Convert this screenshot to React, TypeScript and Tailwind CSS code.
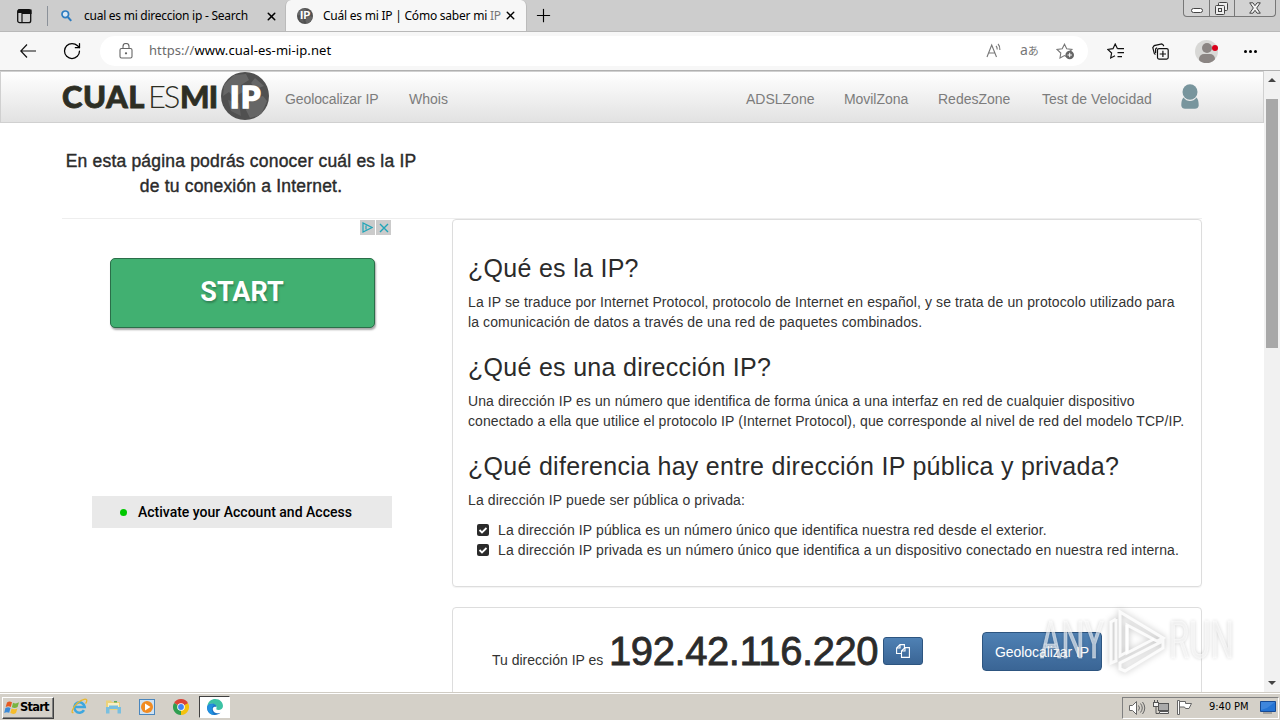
import { ReactNode } from "react";
import { LuPlus, LuX, LuRotateCw } from "react-icons/lu";

const UI = "font-['Noto_Sans',sans-serif]";

function Globe({ size, children }: { size: string; children?: ReactNode }) {
  return (
    <div className={`${size} relative shrink-0 rounded-full bg-[#505050] overflow-hidden`}>
      <svg viewBox="0 0 48 48" className="w-full h-full">
        <path d="M3 13 L13 3 L25 2 L28 8 L20 13 L22 20 L13 25 L8 20 L2 24Z M31 27 L42 24 L46 29 L40 43 L29 46 L25 38Z M34 6 L43 14 L35 17 L30 11Z" fill="#666" />
        <path d="M7 28 L18 31 L20 44 L10 39Z" fill="#606060" />
      </svg>
      <div className="absolute inset-0 flex items-center justify-center">{children}</div>
    </div>
  );
}

function TabBar() {
  return (
    <div className={`${UI} h-[31px] flex bg-[#cdcdcd] text-xs text-black`}>
      <div className="w-[47px] pl-[17px] pt-[9px]">
        <svg width="15" height="15" viewBox="0 0 15 15">
          <rect x="0.7" y="0.7" width="13" height="13" rx="2" fill="none" stroke="#111" strokeWidth="1.3" />
          <path d="M1 1h13v3.5H5V14" fill="none" stroke="#111" strokeWidth="1.2" />
          <path d="M1 1h13v3H1z" fill="#111" />
        </svg>
      </div>
      <div className="w-[238px] my-[6px] h-5 border-l border-[#8b9199] flex items-center">
        <svg className="ml-[13px]" width="11" height="12" viewBox="0 0 11 12">
          <circle cx="4.3" cy="4.3" r="3.3" fill="#d9e8f5" stroke="#2d7cc0" strokeWidth="1.7" />
          <path d="M6.8 7 10.2 10.8" stroke="#2d7cc0" strokeWidth="2" />
        </svg>
        <span className="ml-[12px] w-[164px] whitespace-nowrap tracking-[-0.26px]">cual es mi direccion ip - Search</span>
        <LuX className="ml-[17px] w-[13px] h-[13px] shrink-0" strokeWidth={2.8} />
      </div>
      <div className="w-[242px] bg-[#f7f7f7] rounded-t-md border-x border-[#bbb] flex items-center">
        <div className="ml-[11px]">
          <Globe size="w-4 h-4">
            <span className="font-['Lato',sans-serif] font-black text-white text-[11px]">IP</span>
          </Globe>
        </div>
        <span className="ml-[10px] w-[171px] whitespace-nowrap tracking-[-0.23px]">
          Cuál es mi IP | Cómo saber mi <span className="text-[#777]">IP</span>
        </span>
        <LuX className="ml-[10px] w-[13px] h-[13px] shrink-0" strokeWidth={2.6} />
      </div>
      <LuPlus className="ml-[6px] mt-[5px] w-[21px] h-[21px]" strokeWidth={1.3} />
      <div className="ml-auto mr-1 w-[93px] h-[17px] flex border border-t-0 border-[#777] rounded-b bg-[#d2d2d2]">
        <div className="w-[26px] pl-[7px] pt-[8px] border-r border-[#777]">
          <div className="w-3 h-[5px] rounded-sm border border-[#444] bg-white" />
        </div>
        <div className="w-[25px] pl-[5px] pt-[2px] border-r border-[#777]">
          <svg width="13" height="13" viewBox="0 0 13 13" fill="#eee" stroke="#444">
            <rect x="3.5" y="0.5" width="9" height="8" rx="1" />
            <rect x="0.5" y="3.5" width="9" height="9" rx="1" />
            <rect x="3.5" y="6.5" width="3" height="3" />
          </svg>
        </div>
        <svg className="ml-[14px] mt-[2px]" width="12" height="12" viewBox="0 0 12 12">
          <path d="M.7.8h3.2L6 3.7 8.1.8h3.2L7.7 6l3.6 5.2H8.1L6 8.3l-2.1 2.9H.7L4.3 6Z" fill="#f3f3f3" stroke="#444" />
        </svg>
      </div>
    </div>
  );
}

function AddressBar() {
  return (
    <div className={`${UI} h-10 bg-[#f7f7f7] border-t border-t-[#b9b9b9] border-b-[#b0b0b0] border-b flex items-center`}>
      <svg className="ml-5 shrink-0" width="16" height="14" viewBox="0 0 16 14" fill="none" stroke="#111" strokeWidth="1.2">
        <path d="M7 .5.8 7 7 13.5M.8 7H16" />
      </svg>
      <LuRotateCw className="ml-[26px] w-5 h-5 shrink-0" strokeWidth={1.5} />
      <div className="ml-[18px] w-[988px] h-[30px] bg-white rounded-full flex items-center shrink-0">
        <svg className="ml-[19px] shrink-0" width="14" height="16" viewBox="0 0 14 16" fill="none" stroke="#666" strokeWidth="1.1">
          <rect x="1" y="5.5" width="12" height="9.500" rx="1.5" />
          <path d="M4 5.500V3.500a3 3 0 0 1 6 0v2" />
          <circle cx="7" cy="10.300" r=".6" fill="#666" />
        </svg>
        <span className="ml-[16px] w-[190px] text-[13px] tracking-[0.08px] whitespace-nowrap text-black">
          <span className="text-[#6b6b6b]">https://</span>www.cual-es-mi-ip.net
        </span>
        <svg className="ml-[647px]" width="17" height="16" viewBox="0 0 17 16" fill="none" stroke="#777" strokeWidth="1.1">
          <path d="M1 14 5.7 2 10.5 14M2.7 10h6M10 3c1 1 1.300 2 1.200 3.500M12 1c1.600 1.600 2.200 3.500 1.900 6" />
        </svg>
        <span className="ml-[17px] mb-[2px] w-[19px] text-[12px] leading-4 text-[#777] flex items-baseline">
          <span className="text-[14px]">a</span>
          <span className="font-['Noto_Sans_CJK_JP',sans-serif] text-[11px]">あ</span>
        </span>
        <svg className="ml-[17px]" width="19" height="17" viewBox="0 0 19 17">
          <path d="m8.500 1.200 2.200 4.600 5.200.7-3.800 3.500.8 5-4.400-2.400L4 15l.8-5L1 6.500l5.200-.7Z" fill="none" stroke="#777" strokeWidth="1.100" />
          <circle cx="13.700" cy="12" r="4.300" fill="#666" />
          <path d="M11.500 12h4.400M13.700 9.800v4.400" stroke="#fff" />
        </svg>
      </div>
      <svg className="ml-[19px] shrink-0" width="18" height="17" viewBox="0 0 18 17" fill="none" stroke="#111" strokeWidth="1.200">
        <path d="M10.500 5.700 8.200 1 6 5.700.8 6.500 4.600 10l-.9 5 4.300-2.300M10.500 5.700H17M10.500 9.700H17M10.500 13.700H15" />
      </svg>
      <svg className="ml-[27px] shrink-0" width="17" height="17" viewBox="0 0 17 17" fill="none" stroke="#111" strokeWidth="1.200">
        <path d="M3.500 11.500 2.300 10.500 .8 4.600 2.200 2.600 9.800.8l1.700 1.400v1M3.600 10V6l1.400-1.400" />
        <rect x="5.500" y="5.600" width="10.700" height="10.500" rx="1.500" />
        <path d="M10.900 7.800v6.300M7.700 11H14" />
      </svg>
      <div className="relative ml-[26px] w-[23px] h-[23px] shrink-0 mr-[26px]">
        <div className="w-[23px] h-[23px] rounded-full overflow-hidden bg-[#d8d8d6] flex flex-col items-center">
          <div className="mt-[3px] w-[10px] h-[10px] shrink-0 rounded-full bg-[#8b8583]" />
          <div className="mt-[1px] w-[16px] h-[10px] shrink-0 rounded-full bg-[#8b8583]" />
        </div>
        <div className="absolute right-0 top-[5px] w-[6px] h-[6px] rounded-full bg-[#d9001b]" />
      </div>
      <div className="flex gap-[2px]">
        <i className="w-[3px] h-[3px] rounded-full bg-black" />
        <i className="w-[3px] h-[3px] rounded-full bg-black" />
        <i className="w-[3px] h-[3px] rounded-full bg-black" />
      </div>
    </div>
  );
}

function Navbar() {
  return (
    <div className="h-[52px] pl-[61px] border border-[#d0d0d0] bg-linear-to-b from-white to-[#e2e2e2] flex items-center text-[14px] text-[#7c7c7c]">
      <div className="w-[159px] h-full flex font-['Lato',sans-serif] text-[31px] leading-[48px] text-[#2d2e24] whitespace-nowrap">
        <span className="w-[86px] font-black tracking-[0.5px] [-webkit-text-stroke:0.800px_#2d2e24]">CUAL</span>
        <span className="w-[32px] font-light tracking-[-2.2px]">ES</span>
        <span className="font-black tracking-[-0.8px] [-webkit-text-stroke:0.800px_#2d2e24]">MI</span>
      </div>
      <div className="-mt-[2px]">
        <Globe size="w-[48px] h-[48px]">
          <span className="pl-[2px] font-['Lato',sans-serif] font-black text-white text-[31px] leading-none tracking-[1.5px] [-webkit-text-stroke:1.600px_#fff]">IP</span>
        </Globe>
      </div>
      <div className="w-[94px] ml-4 pt-1 whitespace-nowrap tracking-[-0.1px]">Geolocalizar IP</div>
      <div className="w-[40px] ml-[30px] pt-1">Whois</div>
      <div className="w-[68px] ml-[297px] pt-1">ADSLZone</div>
      <div className="w-[65px] ml-[30px] pt-1 tracking-[-0.05px]">MovilZona</div>
      <div className="w-[73px] ml-[29px] pt-1">RedesZone</div>
      <div className="w-[111px] ml-[31px] pt-1 whitespace-nowrap">Test de Velocidad</div>
      <svg className="ml-[28px]" width="18" height="26" viewBox="0 0 18 26" fill="#78959d">
        <ellipse cx="9" cy="8" rx="7.500" ry="7.700" />
        <path d="M2.500 13.500C.8 15 .3 18 .3 21.500c0 2 2 3.300 3.700 3.300h10c1.700 0 3.700-1.300 3.700-3.300 0-3.500-.5-6.500-2.200-8-3.500 4.700-9.500 4.700-13 0Z" />
      </svg>
    </div>
  );
}

function Ad() {
  return (
    <div className="w-[390px] pl-[30px] pt-px">
      <div className="w-[299px] flex justify-end gap-px">
        <div className="w-[15px] h-[15px] bg-[#cbcbcb] flex items-center justify-center">
          <svg width="11" height="11" viewBox="0 0 11 11" fill="none" stroke="#20a5b8" strokeWidth="1.200">
            <path d="M1 1v9l9-4.500ZM4 3.500v4" />
          </svg>
        </div>
        <div className="w-[15px] h-[15px] bg-[#cbcbcb] flex items-center justify-center">
          <svg width="10" height="10" viewBox="0 0 10 10" stroke="#20a5b8" strokeWidth="1.400">
            <path d="M1 1l8 8M9 1 1 9" />
          </svg>
        </div>
      </div>
      <div className="ml-[18px] mt-[23px] w-[265px] h-[70px] rounded-[5px] border border-[#2b6e49] bg-[#41b071] shadow-[1px_2px_2px_rgba(0,0,0,0.35)] flex justify-center pt-[17px] pr-[1px] font-['Roboto',sans-serif] font-bold text-[27px] leading-8 text-white [text-shadow:1px_2px_2px_rgba(0,0,0,0.25)]">
        START
      </div>
      <div className="mt-[168px] w-[300px] h-8 bg-[#e9e9e9] flex items-center font-['Roboto',sans-serif] font-medium text-[14px] text-black">
        <i className="ml-[28px] w-[7px] h-[7px] rounded-full bg-[#00c800]" />
        <span className="ml-[11px] whitespace-nowrap">Activate your Account and Access</span>
      </div>
    </div>
  );
}

function Heading({ children }: { children: ReactNode }) {
  return <h2 className="text-[25px] leading-9 mt-[17px] mb-[6px] tracking-[0.29px] text-[#2b2b2b] whitespace-nowrap">{children}</h2>;
}

function Check({ children }: { children: ReactNode }) {
  return (
    <li className="flex items-center h-5 whitespace-nowrap">
      <svg className="mr-[9px]" width="12" height="12" viewBox="0 0 12 12">
        <rect width="12" height="12" rx="2" fill="#2b2b2b" />
        <path d="m2.500 6 2.500 2.500 4.500-4.500" fill="none" stroke="#fff" strokeWidth="1.800" />
      </svg>
      {children}
    </li>
  );
}

function Panels() {
  return (
    <div className="w-[750px] text-[14px] leading-5 tracking-[0.11px] text-[#333]">
      <div className="h-[368px] border border-[#ddd] rounded-[4px] pl-[15px] pt-[13px] shadow-[0_1px_1px_rgba(0,0,0,0.05)]">
        <Heading>¿Qué es la IP?</Heading>
        <p className="whitespace-nowrap">
          La IP se traduce por Internet Protocol, protocolo de Internet en español, y se trata de un protocolo utilizado para<br />
          la comunicación de datos a través de una red de paquetes combinados.
        </p>
        <Heading>¿Qué es una dirección IP?</Heading>
        <p className="whitespace-nowrap tracking-[0.095px]">
          Una dirección IP es un número que identifica de forma única a una interfaz en red de cualquier dispositivo<br />
          conectado a ella que utilice el protocolo IP (Internet Protocol), que corresponde al nivel de red del modelo TCP/IP.
        </p>
        <Heading>¿Qué diferencia hay entre dirección IP pública y privada?</Heading>
        <p>La dirección IP puede ser pública o privada:</p>
        <ul className="mt-[10px] pl-[9px]">
          <Check>La dirección IP pública es un número único que identifica nuestra red desde el exterior.</Check>
          <Check>La dirección IP privada es un número único que identifica a un dispositivo conectado en nuestra red interna.</Check>
        </ul>
      </div>
      <div className="mt-5 h-[120px] border border-[#ddd] rounded-[4px] pl-[39px] pt-[23px] flex items-start">
        <span className="mt-[19px] w-[117px] whitespace-nowrap tracking-normal">Tu dirección IP es</span>
        <span className="w-[274px] text-[40px] leading-[40px] tracking-[-0.42px] text-[#2b2b2b] [-webkit-text-stroke:0.800px_#2b2b2b]">192.42.116.220</span>
        <div className="mt-[6px] w-10 h-7 rounded-[3px] border border-[#2d5580] bg-linear-to-b from-[#4f81b4] to-[#3a6595] flex items-center justify-center">
          <svg width="14" height="14" viewBox="0 0 14 14" fill="none" stroke="#fff" strokeWidth="1.100">
            <path d="M5 9.500H.6V4L4 .6h4.400V4M4 .6V4H.6M5.500 7 9 3.600h4.400v9.800H5.500ZM9 3.600V7H5.500" />
          </svg>
        </div>
        <div className="ml-[59px] mt-px w-[120px] h-[39px] rounded-[4px] border border-[#2d5580] bg-linear-to-b from-[#4f81b4] to-[#3a6595] text-white tracking-[-0.05px] flex items-center justify-center whitespace-nowrap">
          Geolocalizar IP
        </div>
      </div>
    </div>
  );
}

function Scrollbar() {
  return (
    <div className="w-4 bg-[#f1f1f1] flex flex-col items-center">
      <i className="mt-[7px] border-x-4 border-b-4 border-x-transparent border-b-[#444]" />
      <div className="mt-[17px] w-3 h-[249px] bg-[#a8a8a8]" />
      <i className="mt-auto mb-[7px] border-x-4 border-t-4 border-x-transparent border-t-[#444]" />
    </div>
  );
}

function Watermark() {
  return (
    <div className="absolute left-[1040px] top-[608px] flex items-center h-[66px] font-['Roboto',sans-serif] text-[52px] leading-none text-white/60 [text-shadow:0_0_5px_rgba(0,0,0,0.2)] [-webkit-text-stroke:1px_rgba(255,255,255,0.4)]">
      <span className="w-[67px] whitespace-nowrap"><span className="inline-block origin-left scale-x-[0.63]">ANY</span></span>
      <svg width="62" height="66" viewBox="0 0 62 66" className="drop-shadow-[0_0_3px_rgba(0,0,0,0.3)]">
        <g fill="none" stroke="#fff" strokeOpacity="0.85" strokeWidth="3">
          <path d="M9 11 4 14v41l5-2V11" />
          <path d="M13 4v44l7-4V17l30 16 6-3Z" />
          <path d="M20 17v28l27-14" />
          <path d="M13 55v6l5 2 38-23v-7Z" />
        </g>
      </svg>
      <span className="w-[66px] whitespace-nowrap"><span className="inline-block origin-left scale-x-[0.63]">RUN</span></span>
    </div>
  );
}

function Taskbar() {
  return (
    <div className="h-7 bg-[#d4d0c8] border-t border-[#d0ccc4] shadow-[inset_0_1px_0_#fff] flex items-center font-['DejaVu_Sans',sans-serif] text-black">
      <div className="ml-[2px] mt-[2px] w-[52px] h-[22px] border border-t-white border-l-white border-r-[#404040] border-b-[#404040] shadow-[inset_-1px_-1px_0_#808080] flex items-center">
        <svg className="ml-px shrink-0" width="16" height="16" viewBox="0 0 16 16">
          <path d="M3 2.500C5 1 6.500 1.500 8 2.300L6.800 7C5 6 3.500 6.200 1.700 7Z" fill="#e65a22" />
          <path d="M9 2.800c2 1 4 .8 6-.5l-1.400 4.800c-2 1.200-3.800 1.200-5.700.2Z" fill="#79b440" />
          <path d="M1.400 8C3.300 7 5 7.100 6.500 8l-1.300 4.800C3.500 12 2 12 .2 13Z" fill="#3b8ad8" />
          <path d="M7.600 8.400c2 1 4 1 5.800 0L12 13c-2 1.300-4 1-5.700.1Z" fill="#f6bd2b" />
        </svg>
        <span className="font-bold text-[11.5px] tracking-[-0.8px]">Start</span>
      </div>
      <div className="ml-[17px] flex items-center">
        <svg width="17" height="17" viewBox="0 0 17 17" fill="none">
          <path d="M13 12.200A5.200 5.200 0 1 1 13.700 9H4.500" stroke="#3ea7df" strokeWidth="2.600" />
          <path d="M2.500 14.500C-.5 16 1.500 9.500 6.500 5S16 .5 15.800 2.500 15 5 14.500 5.500" stroke="#e9b72e" strokeWidth="1.300" />
        </svg>
        <svg className="ml-[17px]" width="17" height="17" viewBox="0 0 17 17">
          <path d="M1 2.500h5l1 1.500h8v8H1Z" fill="#ecd27a" />
          <path d="M3 5h11v4H3Z" fill="#faf0c4" />
          <path d="M9 3h3v1.500H9Z" fill="#5aaa58" />
          <path d="M1 9h3V7.500h9V9h3v6.500h-3.500V11h-8v4.500H1Z" fill="#79bfe0" />
        </svg>
        <svg className="ml-[17px]" width="16" height="16" viewBox="0 0 16 16">
          <rect x=".5" y=".5" width="15" height="15" fill="#cfe2f3" stroke="#4a86bd" />
          <circle cx="8" cy="8" r="6" fill="#f18b22" />
          <path d="m6 4.500 5.500 3.500L6 11.500Z" fill="#fff" />
        </svg>
        <svg className="ml-[18px]" width="16" height="16" viewBox="0 0 16 16">
          <path d="M8 8 1.070 4A8 8 0 0 1 14.930 4Z" fill="#db4437" />
          <path d="M8 8 14.930 4A8 8 0 0 1 8 16Z" fill="#f4c20d" />
          <path d="M8 8v8A8 8 0 0 1 1.070 4Z" fill="#2f9e50" />
          <path d="M8 4h6.930L8 8Z" fill="#db4437" />
          <circle cx="8" cy="8" r="3.800" fill="#fff" />
          <circle cx="8" cy="8" r="2.900" fill="#4285f4" />
        </svg>
      </div>
      <div className="ml-[10px] mt-[1px] w-[31px] h-[22px] bg-white border border-t-[#404040] border-l-[#404040] border-r-white border-b-white flex items-center justify-center">
        <svg width="16" height="16" viewBox="0 0 16 16">
          <path d="M.3 7C1 2.500 4.500 0 8.300 0 13 0 16 3.500 16 7c0 2.800-2.200 4-4.500 4-1.800 0-2.700-.6-2-1.700C10.500 6 4.500 2.500.3 7Z" fill="#3cc2a4" />
          <path d="M.3 7C2 3.500 9.500 3.500 9.500 8.200 7 7 5.500 8.500 5.800 10.500 6.200 13.500 9.500 15.300 13.500 13.800 9.500 18-.5 16 .1 8Z" fill="#1b74c5" />
          <path d="M.3 8C1 5 5 4 7.500 6 4.500 7 3.500 12 7.500 16 3 16 0 12.500.3 8Z" fill="#2191e0" />
        </svg>
      </div>
      <div className="ml-auto mr-px mt-[2px] h-[22px] w-[157px] border border-t-[#808080] border-l-[#808080] border-r-white border-b-white flex items-center">
        <svg className="ml-[6px]" width="17" height="14" viewBox="0 0 17 14" fill="#fff" stroke="#666">
          <path d="M.5 4.500h3l4-4v13l-4-4h-3Z" />
          <path d="M9.500 4.500q2 2.500 0 5M11.500 2.500q3.500 4.500 0 9M13.500 1q4.500 6 0 12" fill="none" />
        </svg>
        <svg className="ml-[7px]" width="17" height="15" viewBox="0 0 17 15" fill="#f4f4f4" stroke="#555">
          <rect x="5.500" y="3.500" width="10" height="7" fill="#aaa" />
          <path d="M6.500 13.500h9v-2h-9Z" />
          <path d="M1.500 0v3M4.500 0v3M3 6v7.500h3" fill="none" />
          <rect x=".5" y="2.500" width="5" height="4" />
        </svg>
        <svg className="ml-[7px]" width="16" height="15" viewBox="0 0 16 15" fill="#fff" stroke="#666">
          <path d="M.5.5v14h2V.5Z" />
          <path d="M2.500 1.500h6v2h6l-2.500 5H8.500l-1-1.500h-5Z" />
        </svg>
        <span className="ml-[16px] w-[40px] text-[11px] tracking-[-0.05px] whitespace-nowrap font-['DejaVu_Sans_Condensed','DejaVu_Sans',sans-serif] [font-stretch:condensed]">9:40 PM</span>
        <svg className="ml-[11px]" width="16" height="13" viewBox="0 0 16 13">
          <path d="M.5.5h15v10H.5Z" fill="#2574d4" stroke="#174a94" />
          <path d="M1 1h14L7 7l-6 2Z" fill="#3f86dc" />
          <path d="M3 12h9" stroke="#777" />
        </svg>
      </div>
    </div>
  );
}

export default function App() {
  return (
    <div className="relative w-[1280px] h-[720px] overflow-hidden bg-white flex flex-col font-['Liberation_Sans',sans-serif]">
      <TabBar />
      <AddressBar />
      <div className="h-[621px] flex overflow-hidden">
        <div className="w-[1264px]">
          <Navbar />
          <div className="pl-[62px] w-[1202px]">
            <h1 className="w-[358px] h-[95px] pt-[26px] text-center text-[17.5px] leading-[25px] tracking-[0.19px] text-[#2b2b2b] [-webkit-text-stroke:0.400px_#2b2b2b] whitespace-nowrap">
              En esta página podrás conocer cuál es la IP<br />
              de tu conexión a Internet.
            </h1>
            <div className="flex border-t border-[#eee]">
              <Ad />
              <Panels />
            </div>
          </div>
        </div>
        <Scrollbar />
      </div>
      <Taskbar />
      <Watermark />
    </div>
  );
}
